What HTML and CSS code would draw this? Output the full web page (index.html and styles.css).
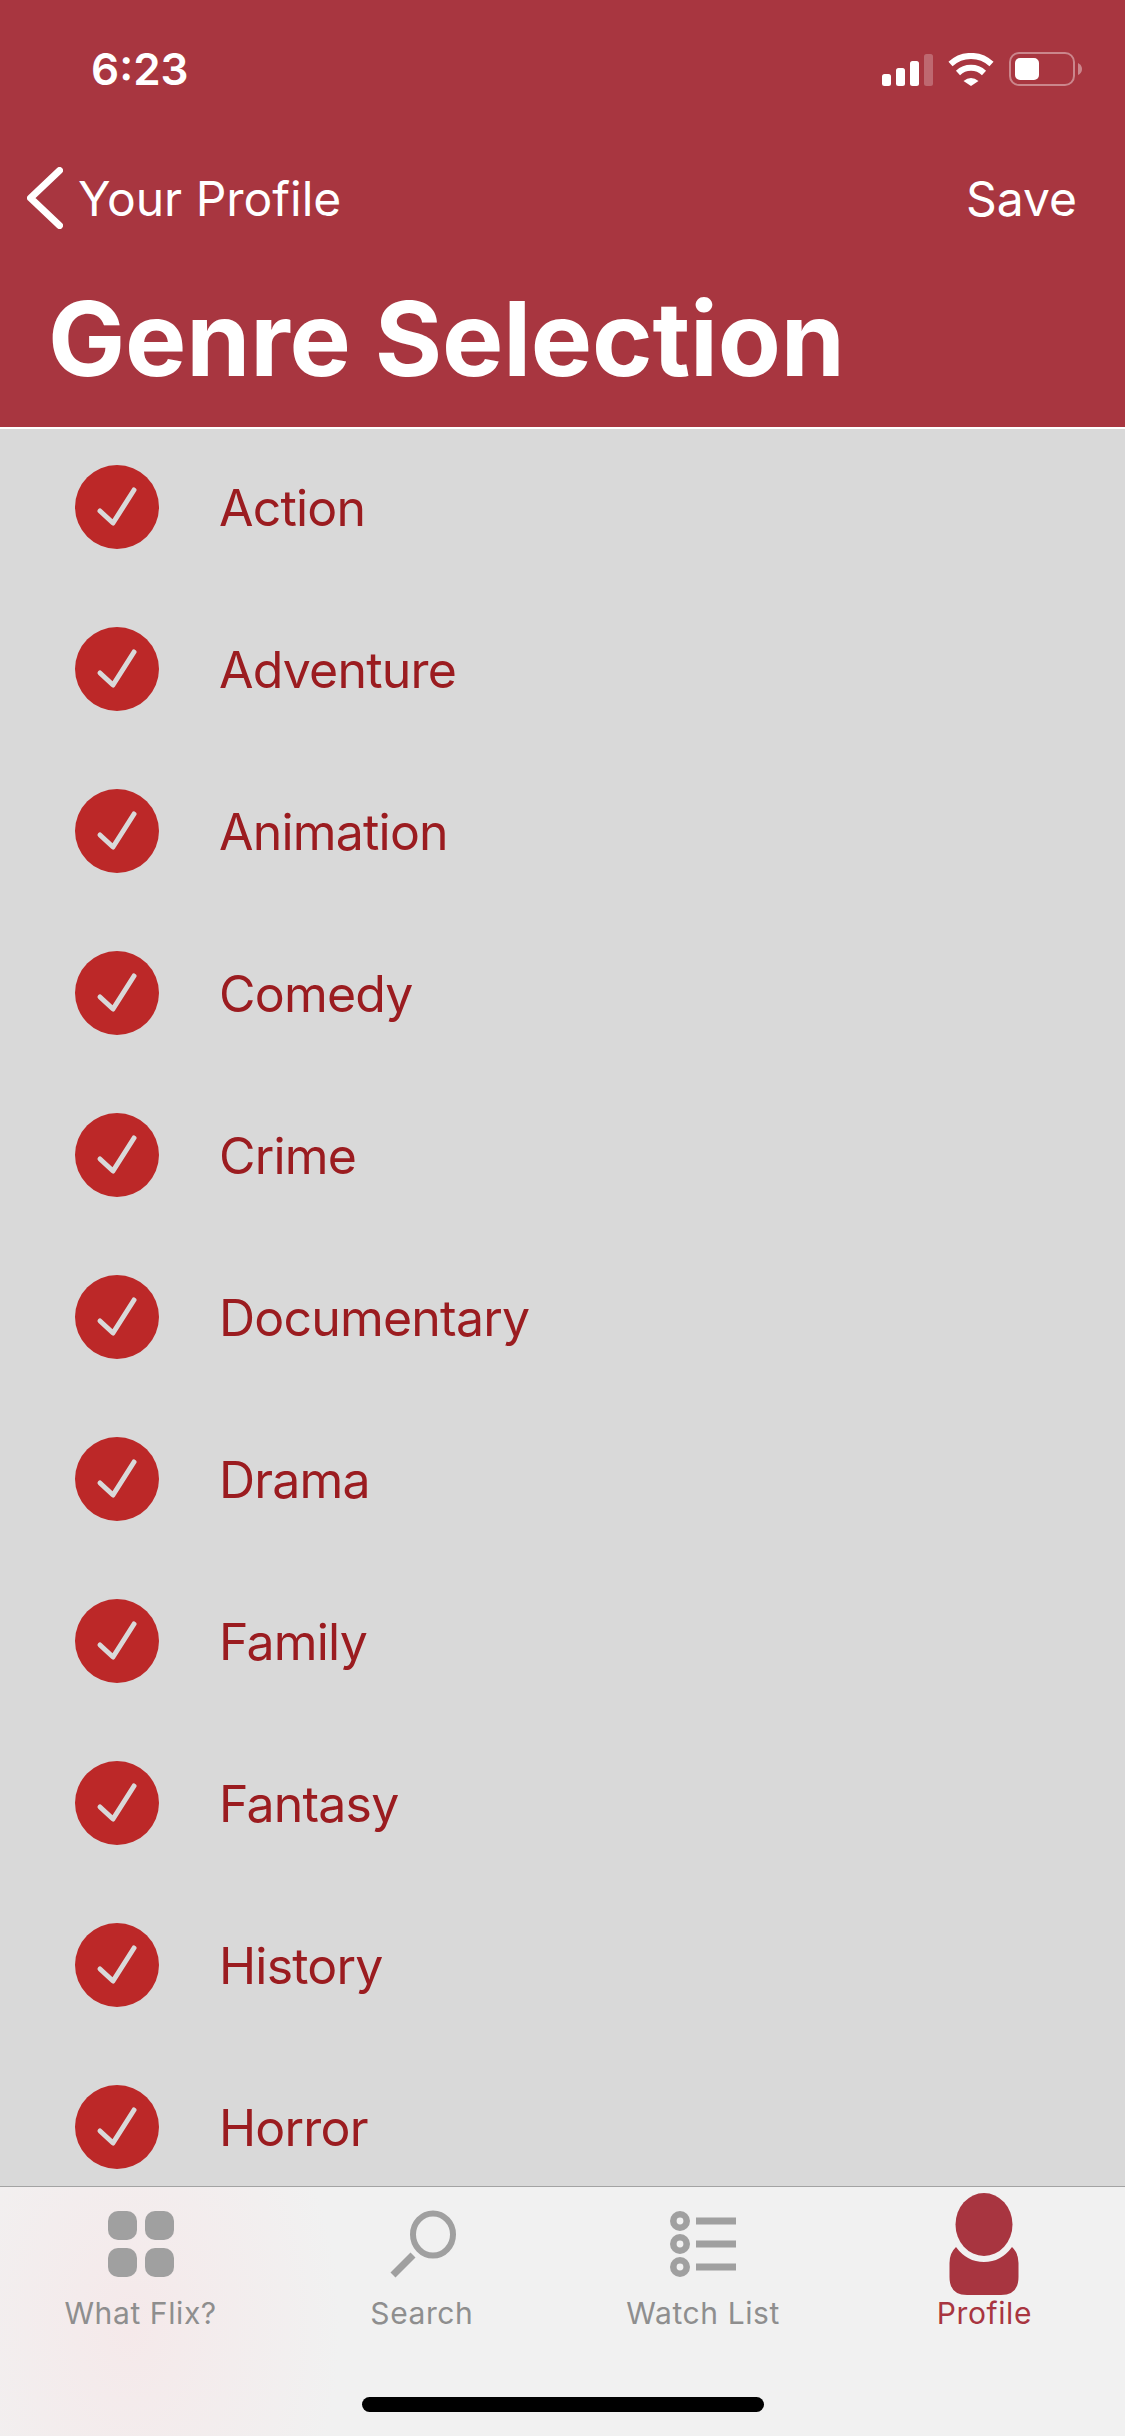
FILE: index.html
```html
<!DOCTYPE html>
<html lang="en">
<head>
  <meta charset="UTF-8">
  <meta name="viewport" content="width=device-width, initial-scale=1.0">
  <title>Genre Selection</title>
  <link rel="stylesheet" href="styles.css">
</head>
<body>
  <svg class="defs" width="0" height="0">
    <symbol id="checked" viewBox="0 0 84 84">
      <circle cx="42" cy="42" r="42" fill="#bc2828"/>
      <path d="M25 46 L38 58 L59 25" fill="none" stroke="#d9d9d9" stroke-width="5" stroke-linecap="round" stroke-linejoin="round"/>
    </symbol>
  </svg>

  <div class="header">
    <div class="status-bar">
      <div class="time">6:23</div>
      <div class="status-icons">
        <svg width="51" height="32" viewBox="0 0 51 32">
          <rect x="0" y="20" width="9" height="12" rx="2.5" fill="#fff"/>
          <rect x="14" y="14" width="9" height="18" rx="2.5" fill="#fff"/>
          <rect x="28" y="7" width="9" height="25" rx="2.5" fill="#fff"/>
          <rect x="42" y="0" width="9" height="32" rx="2.5" fill="#fff" fill-opacity="0.25"/>
        </svg>
        <svg width="46" height="33" viewBox="0 0 46 33">
          <path d="M2.5 11 A30 30 0 0 1 43.5 11" fill="none" stroke="#fff" stroke-width="6"/>
          <path d="M10 20 A19 19 0 0 1 36 20" fill="none" stroke="#fff" stroke-width="6"/>
          <path d="M15.5 28 Q23 22 30.5 28 L23 33 Z" fill="#fff"/>
        </svg>
        <svg width="73" height="34" viewBox="0 0 73 34">
          <rect x="1" y="1" width="64" height="32" rx="9" fill="none" stroke="#fff" stroke-opacity="0.4" stroke-width="2"/>
          <rect x="6" y="6" width="24" height="22" rx="5" fill="#fff"/>
          <path d="M69 11 Q73 13 73 17 Q73 21 69 23 Z" fill="#fff" fill-opacity="0.4"/>
        </svg>
      </div>
    </div>
    <div class="nav-bar">
      <a class="back">
        <svg width="36" height="62" viewBox="0 0 36 62">
          <path d="M32.5 3.5 L3.5 31 L32.5 58.5" fill="none" stroke="#fff" stroke-width="7" stroke-linecap="round" stroke-linejoin="round"/>
        </svg>
        <span>Your Profile</span>
      </a>
      <a class="save">Save</a>
    </div>
    <h1 class="page-title">Genre Selection</h1>
  </div>

  <div class="genre-list">
    <div class="genre"><svg class="check"><use href="#checked"/></svg><span>Action</span></div>
    <div class="genre"><svg class="check"><use href="#checked"/></svg><span>Adventure</span></div>
    <div class="genre"><svg class="check"><use href="#checked"/></svg><span>Animation</span></div>
    <div class="genre"><svg class="check"><use href="#checked"/></svg><span>Comedy</span></div>
    <div class="genre"><svg class="check"><use href="#checked"/></svg><span>Crime</span></div>
    <div class="genre"><svg class="check"><use href="#checked"/></svg><span>Documentary</span></div>
    <div class="genre"><svg class="check"><use href="#checked"/></svg><span>Drama</span></div>
    <div class="genre"><svg class="check"><use href="#checked"/></svg><span>Family</span></div>
    <div class="genre"><svg class="check"><use href="#checked"/></svg><span>Fantasy</span></div>
    <div class="genre"><svg class="check"><use href="#checked"/></svg><span>History</span></div>
    <div class="genre"><svg class="check"><use href="#checked"/></svg><span>Horror</span></div>
  </div>

  <div class="tab-bar">
    <div class="tabs">
      <div class="tab">
        <svg class="tab-icon" viewBox="0 0 80 102">
          <rect x="7" y="18" width="29" height="29" rx="10" fill="#a0a0a0"/>
          <rect x="44" y="18" width="29" height="29" rx="10" fill="#a0a0a0"/>
          <rect x="7" y="55" width="29" height="29" rx="10" fill="#a0a0a0"/>
          <rect x="44" y="55" width="29" height="29" rx="10" fill="#a0a0a0"/>
        </svg>
        <span>What Flix?</span>
      </div>
      <div class="tab">
        <svg class="tab-icon" viewBox="0 0 80 102">
          <ellipse cx="51" cy="41.5" rx="20" ry="21" fill="none" stroke="#a0a0a0" stroke-width="6"/>
          <path d="M31 62 L11 82" fill="none" stroke="#a0a0a0" stroke-width="7"/>
        </svg>
        <span>Search</span>
      </div>
      <div class="tab">
        <svg class="tab-icon" viewBox="0 0 80 102">
          <circle cx="17" cy="28" r="6.7" fill="none" stroke="#a0a0a0" stroke-width="6.6"/>
          <circle cx="17" cy="51" r="6.7" fill="none" stroke="#a0a0a0" stroke-width="6.6"/>
          <circle cx="17" cy="74" r="6.7" fill="none" stroke="#a0a0a0" stroke-width="6.6"/>
          <rect x="33" y="24.5" width="40" height="7" fill="#a0a0a0"/>
          <rect x="33" y="47.5" width="40" height="7" fill="#a0a0a0"/>
          <rect x="33" y="70.5" width="40" height="7" fill="#a0a0a0"/>
        </svg>
        <span>Watch List</span>
      </div>
      <div class="tab active">
        <svg class="tab-icon" viewBox="0 0 80 102">
          <ellipse cx="40" cy="31.5" rx="28.5" ry="31.5" fill="#a83540"/>
          <path d="M12 54 Q23 69 40 69 Q57 69 68 54 Q74.5 60 74.5 70 L74.5 84 Q74.5 102 57 102 L23 102 Q5.5 102 5.5 84 L5.5 70 Q5.5 60 12 54 Z" fill="#a83540"/>
        </svg>
        <span>Profile</span>
      </div>
    </div>
    <div class="home-indicator"></div>
  </div>
</body>
</html>
```

FILE: styles.css
```css
* {
  box-sizing: border-box;
  margin: 0;
  padding: 0;
}
html, body {
  height: 100%;
}
body {
  display: flex;
  flex-direction: column;
  overflow: hidden;
  font-family: Inter, "Liberation Sans", sans-serif;
  background-color: #d9d9d9;
}
.defs {
  position: absolute;
}
.header {
  height: 427px;
  flex-shrink: 0;
  background-color: #a83640;
  color: #fff;
}
.status-bar {
  display: flex;
  justify-content: space-between;
  align-items: center;
  height: 138px;
  padding: 0 43px 0 91px;
}
.time {
  font-size: 44px;
  font-weight: 600;
}
.status-icons {
  display: flex;
  align-items: flex-end;
  gap: 15px;
}
.nav-bar {
  display: flex;
  justify-content: space-between;
  align-items: center;
  height: 120px;
  padding: 0 48px 0 27px;
  font-size: 48px;
}
.back {
  display: flex;
  align-items: center;
  gap: 15px;
}
.page-title {
  padding-left: 48px;
  font-size: 103px;
  font-weight: 700;
  line-height: 162px;
  letter-spacing: -0.2px;
}
.genre-list {
  flex: 1;
  min-height: 0;
  display: flex;
  flex-direction: column;
  gap: 78px;
  padding: 36px 0 0 75px;
  border-top: 2px solid #fff;
  overflow: hidden;
}
.genre {
  display: flex;
  align-items: center;
  gap: 60px;
  flex-shrink: 0;
  height: 84px;
  font-size: 50px;
  letter-spacing: -0.8px;
  color: #9b1c20;
}
.genre span {
  padding-top: 2px;
}
.check {
  width: 84px;
  height: 84px;
  flex-shrink: 0;
}
.tab-bar {
  height: 250px;
  flex-shrink: 0;
  border-top: 1px solid #a3a3a3;
  background: radial-gradient(ellipse 210px 300px at 130px 140px, #f5e9ea, #f1f1f1 100%);
  background-color: #f1f1f1;
}
.tabs {
  display: grid;
  grid-template-columns: repeat(4, 1fr);
  padding-top: 6px;
}
.tab {
  display: flex;
  flex-direction: column;
  align-items: center;
  font-size: 30px;
  color: #8e8e8e;
  letter-spacing: 0.6px;
}
.tab.active {
  color: #a83540;
}
.tab-icon {
  width: 80px;
  height: 102px;
}
.home-indicator {
  width: 402px;
  height: 15px;
  margin: 66px auto 0;
  border-radius: 8px;
  background-color: #000;
}
```
